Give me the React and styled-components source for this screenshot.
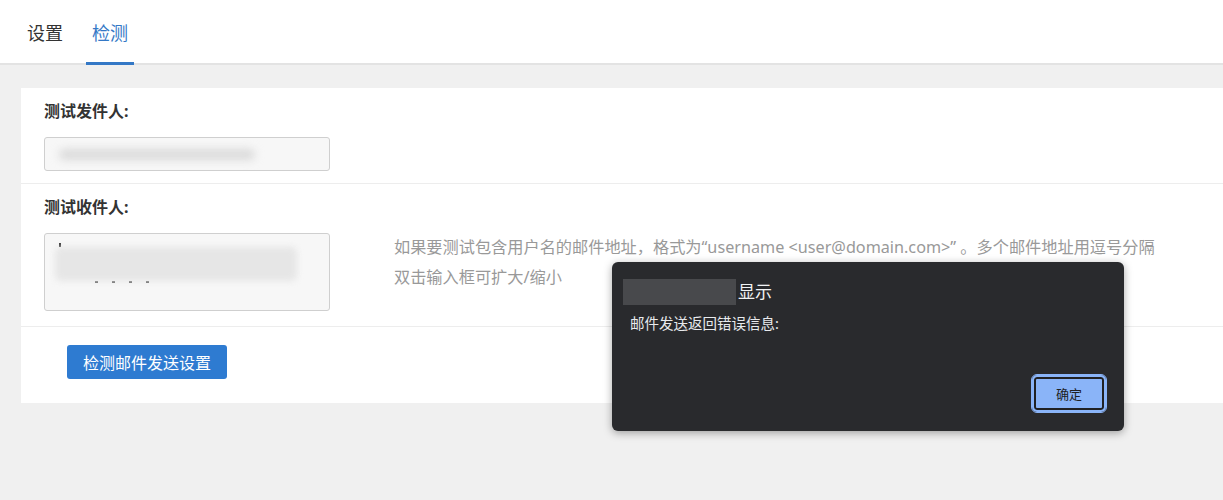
import React from 'react';
import styled, { createGlobalStyle } from 'styled-components';

const GlobalStyle = createGlobalStyle`
  html, body {
    margin: 0;
    padding: 0;
    background: #f0f0f0;
    font-family: "Noto Sans", "Noto Sans CJK SC", sans-serif;
  }
  #root {
    height: 500px;
    position: relative;
    overflow: hidden;
  }
`;

const tabs = ['设置', '检测'];

const App = () => (
  <>
    <GlobalStyle />
    <Header>
      {tabs.map(tab => (
        <Tab key={tab} active={tab === '检测'}>
          {tab}
        </Tab>
      ))}
    </Header>
    <Body>
      <Panel>
        <Section bottom={12}>
          <FieldLabel>测试发件人:</FieldLabel>
          <Input>
            <Blur width={196} height={11} />
          </Input>
        </Section>
        <Section bottom={15}>
          <FieldLabel>测试收件人:</FieldLabel>
          <Row>
            <TextArea>
              <Caret />
              <Blur width={242} height={34} light />
              <Dots>
                {[0, 30, 67, 118].map(x => (
                  <Dot key={x} style={{ marginLeft: x ? 14 : 40 }} />
                ))}
              </Dots>
            </TextArea>
            <Help>
              <p>如果要测试包含用户名的邮件地址，格式为“username &lt;user@domain.com&gt;” 。多个邮件地址用逗号分隔</p>
              <p>双击输入框可扩大/缩小</p>
            </Help>
          </Row>
        </Section>
        <Footer>
          <PrimaryButton>检测邮件发送设置</PrimaryButton>
        </Footer>
      </Panel>
    </Body>

    <Dialog>
      <DialogTitle>
        <TitleMask />
        <span>显示</span>
      </DialogTitle>
      <DialogMessage>邮件发送返回错误信息:</DialogMessage>
      <DialogActions>
        <OkButton>确定</OkButton>
      </DialogActions>
    </Dialog>
  </>
);

const Header = styled.div`
  display: flex;
  gap: 17px;
  height: 63px;
  padding-left: 21px;
  background: #fff;
  border-bottom: 2px solid #e3e3e3;
  box-sizing: content-box;
`;

const Tab = styled.div`
  display: flex;
  align-items: center;
  padding: 2px 6px 0;
  font-size: 18px;
  color: ${({ active }) => (active ? '#3478c6' : '#333')};
  border-bottom: 3px solid ${({ active }) => (active ? '#3478c6' : 'transparent')};
  margin-bottom: -2px;
`;

const Body = styled.div`
  padding: 23px 0 0 21px;
`;

const Panel = styled.div`
  background: #fff;
  padding: 0 0 24px;
`;

const Section = styled.div`
  padding: 10px 23px ${({ bottom }) => bottom}px;
  border-bottom: 1px solid #ededed;
`;

const FieldLabel = styled.div`
  font-size: 16px;
  font-weight: 700;
  color: #333;
  line-height: 26px;
  margin-bottom: 13px;
`;

const Input = styled.div`
  width: 286px;
  height: 34px;
  box-sizing: border-box;
  background: #f7f7f7;
  border: 1px solid #cfcfcf;
  border-radius: 3px;
  display: flex;
  align-items: center;
  padding-left: 14px;
  overflow: hidden;
`;

const Blur = styled.div`
  width: ${({ width }) => width}px;
  height: ${({ height }) => height}px;
  background: ${({ light }) => (light ? '#e6e6e6' : '#dadada')};
  filter: blur(${({ light }) => (light ? 3 : 4)}px);
  border-radius: 6px;
`;

const Row = styled.div`
  display: flex;
  align-items: flex-start;
`;

const TextArea = styled.div`
  width: 286px;
  height: 78px;
  flex-shrink: 0;
  background: #f7f7f7;
  border: 1px solid #cfcfcf;
  border-radius: 3px;
  padding: 9px 0 0 10px;
  box-sizing: border-box;
  display: flex;
  flex-direction: column;
`;

const Caret = styled.div`
  width: 2px;
  height: 4px;
  background: #333;
  margin: 0 0 0 4px;
`;

const Dots = styled.div`
  display: flex;
`;

const Dot = styled.div`
  width: 3px;
  height: 2px;
  background: #555;
`;

const Help = styled.div`
  margin: -1px 0 0 64px;
  font-size: 16.2px;
  line-height: 30px;
  color: #999;
  white-space: nowrap;

  p {
    margin: 0;
  }
`;

const Footer = styled.div`
  padding: 18px 46px 0;
`;

const PrimaryButton = styled.button`
  display: block;
  width: 160px;
  height: 34px;
  border: none;
  border-radius: 3px;
  background: #2e7bd1;
  color: #fff;
  font-family: inherit;
  font-size: 16px;
  padding: 0;
`;

const Dialog = styled.div`
  position: absolute;
  left: 612px;
  top: 262px;
  width: 512px;
  height: 169px;
  box-sizing: border-box;
  background: #292a2d;
  border-radius: 6px;
  box-shadow: 0 2px 8px rgba(0, 0, 0, 0.35);
  padding: 17px 18px 19px 18px;
  display: flex;
  flex-direction: column;
  color: #e8eaed;
`;

const DialogTitle = styled.div`
  display: flex;
  align-items: center;
  gap: 2px;
  margin-left: -7px;
  font-size: 17px;
  line-height: 26px;
  color: #f1f3f4;
`;

const TitleMask = styled.div`
  width: 113px;
  height: 26px;
  background: #48494c;
`;

const DialogMessage = styled.div`
  margin-top: 7px;
  font-size: 14.5px;
  line-height: 22px;
`;

const DialogActions = styled.div`
  margin-top: auto;
  display: flex;
  justify-content: flex-end;
`;

const OkButton = styled.button`
  width: 74px;
  height: 37px;
  box-sizing: border-box;
  border-radius: 5px;
  background: #8ab4f8;
  border: 2px solid #8ab4f8;
  box-shadow: inset 0 0 0 2px #202124;
  outline: 1px solid #8ab4f8;
  color: #202124;
  font-family: inherit;
  font-size: 13px;
  padding: 0;
`;

export default App;
